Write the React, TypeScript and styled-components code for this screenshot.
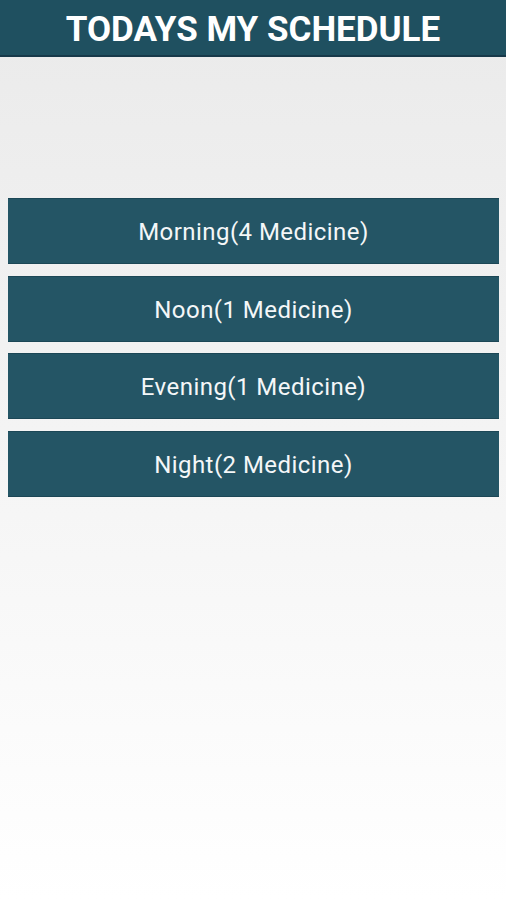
import React from 'react';
import styled, { createGlobalStyle } from 'styled-components';

const GlobalStyle = createGlobalStyle`
  html, body {
    margin: 0;
    padding: 0;
  }
  body {
    font-family: Roboto, 'Noto Sans', sans-serif;
  }
`;

const Page = styled.div`
  min-height: 900px;
  display: flex;
  flex-direction: column;
  background: linear-gradient(#eaeaea, #ffffff);
`;

const Header = styled.header`
  height: 57px;
  box-sizing: border-box;
  padding-top: 3px;
  background: #1f5060;
  border-bottom: 2px solid #17394a;
  display: flex;
  align-items: center;
  justify-content: center;
  color: #ffffff;
  font-size: 35px;
  font-weight: 700;
`;

const List = styled.div`
  display: flex;
  flex-direction: column;
  gap: 11.7px;
  padding: 141px 7px 0 8px;
`;

const SlotButton = styled.button`
  height: 66px;
  border: none;
  border-top: 1px solid #1c4756;
  border-bottom: 1px solid #1c4756;
  background: #245565;
  color: #f4f7f8;
  font-family: Roboto, 'Noto Sans', sans-serif;
  font-size: 24px;
  letter-spacing: 0.45px;
  padding: 2px 0 0;
  cursor: pointer;
`;

const slots = [
  { name: 'Morning', count: 4 },
  { name: 'Noon', count: 1 },
  { name: 'Evening', count: 1 },
  { name: 'Night', count: 2 },
];

const App = () => {
  return (
    <Page>
      <GlobalStyle />
      <Header>TODAYS MY SCHEDULE</Header>
      <List>
        {slots.map((s) => (
          <SlotButton key={s.name}>
            {s.name}({s.count} Medicine)
          </SlotButton>
        ))}
      </List>
    </Page>
  );
};

export default App;
